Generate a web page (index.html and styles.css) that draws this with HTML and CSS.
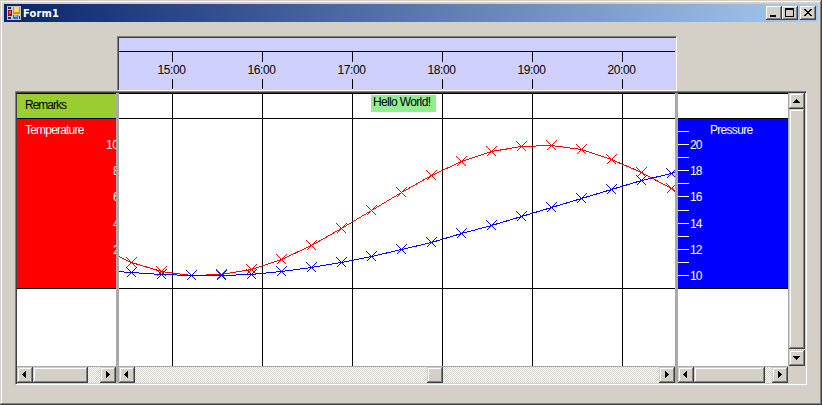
FILE: index.html
```html
<!DOCTYPE html>
<html lang="en">
<head>
    <meta charset="UTF-8">
    <title>Form1</title>
    <link rel="stylesheet" href="styles.css">
</head>
<body>
    <div class="window">
        <div class="titlebar">
            <svg class="app-icon" width="14" height="14">
                <rect width="14" height="14" fill="#c8c8c8"/>
                <rect x="1" y="1" width="3" height="2" fill="#123070"/>
                <rect x="1" y="4" width="4" height="6" fill="#a01010"/>
                <rect x="2" y="5" width="2" height="3" fill="#f05040"/>
                <rect x="6" y="1" width="7" height="7" fill="#d89010"/>
                <rect x="7" y="1" width="5" height="5" fill="#ffe050"/>
                <rect x="6" y="9" width="5" height="4" fill="#3070d0"/>
                <rect x="7" y="9" width="3" height="2" fill="#80b8ff"/>
                <rect x="1" y="11" width="3" height="2" fill="#123070"/>
                <rect x="12" y="10" width="1" height="3" fill="#123070"/>
            </svg>
            <span class="title">Form1</span>
            <div class="buttons">
                <div class="btn"><svg width="12" height="10"><path d="M2 7h6v2H2z"/></svg></div>
                <div class="btn"><svg width="12" height="10"><path d="M1 0h9v9H1zM2 2v6h7V2z" fill-rule="evenodd"/></svg></div>
                <div class="btn close"><svg width="12" height="10"><path d="M2 1h2v1h1v1h2v-1h1v-1h2v1h-1v1h-1v1h-1v1h1v1h1v1h1v1h-2v-1h-1v-1h-2v1h-1v1h-2v-1h1v-1h1v-1h1v-1h-1v-1h-1v-1h-1z"/></svg></div>
            </div>
        </div>

        <div class="client">
            <div class="timescale">
                <svg id="scale" width="556" height="51"></svg>
            </div>
            <div class="grid">
                <div class="panes">
                    <div class="pane left">
                        <div class="view">
                            <div class="row remarks">Remarks</div>
                            <div class="row temperature">
                                <span>Temperature</span>
                                <svg id="tempAxis" class="axis" width="99" height="169"></svg>
                            </div>
                        </div>
                        <div class="hscroll">
                            <div class="sb"><svg width="16" height="16"><path d="M9 4v7h-1v-1h-1v-1h-1v-1h-1v-1h1v-1h1v-1h1v-1z"/></svg></div>
                            <div class="sb thumb"></div>
                            <div class="track"></div>
                            <div class="sb"><svg width="16" height="16"><path d="M6 4v7h1v-1h1v-1h1v-1h1v-1h-1v-1h-1v-1h-1v-1z"/></svg></div>
                        </div>
                    </div>
                    <div class="splitter"></div>
                    <div class="pane center">
                        <div class="view">
                            <svg id="chart" width="556" height="273"></svg>
                        </div>
                        <div class="hscroll">
                            <div class="sb"><svg width="16" height="16"><path d="M9 4v7h-1v-1h-1v-1h-1v-1h-1v-1h1v-1h1v-1h1v-1z"/></svg></div>
                            <div class="track before"></div>
                            <div class="sb thumb"></div>
                            <div class="track"></div>
                            <div class="sb"><svg width="16" height="16"><path d="M6 4v7h1v-1h1v-1h1v-1h1v-1h-1v-1h-1v-1h-1v-1z"/></svg></div>
                        </div>
                    </div>
                    <div class="splitter"></div>
                    <div class="pane right">
                        <div class="view">
                            <div class="row empty"></div>
                            <div class="row pressure">
                                <span>Pressure</span>
                                <svg id="pressAxis" class="axis" width="110" height="169"></svg>
                            </div>
                        </div>
                        <div class="hscroll">
                            <div class="sb"><svg width="16" height="16"><path d="M9 4v7h-1v-1h-1v-1h-1v-1h-1v-1h1v-1h1v-1h1v-1z"/></svg></div>
                            <div class="sb thumb"></div>
                            <div class="track"></div>
                            <div class="sb"><svg width="16" height="16"><path d="M6 4v7h1v-1h1v-1h1v-1h1v-1h-1v-1h-1v-1h-1v-1z"/></svg></div>
                        </div>
                    </div>
                    <div class="vscroll">
                        <div class="sb"><svg width="16" height="16"><path d="M4 10h7v-1h-1v-1h-1v-1h-1v-1h-1v1h-1v1h-1v1h-1z"/></svg></div>
                        <div class="sb thumb"></div>
                        <div class="track"></div>
                        <div class="sb"><svg width="16" height="16"><path d="M4 6h7v1h-1v1h-1v1h-1v1h-1v-1h-1v-1h-1v-1h-1z"/></svg></div>
                    </div>
                </div>
            </div>
        </div>
    </div>
    <script src="chart.js"></script>
</body>
</html>
```
FILE: styles.css
```css
body {
    margin: 0;
    font-family: "Liberation Sans", Arial, sans-serif;
    font-size: 12px;
    overflow: hidden;
}
svg {
    display: block;
    shape-rendering: crispEdges;
}
svg text {
    font-size: 12px;
}
.window {
    width: 822px;
    height: 405px;
    box-sizing: border-box;
    padding: 4px;
    background: #d4d0c8;
    box-shadow: inset -1px -1px #404040, inset 1px 1px #d4d0c8, inset -2px -2px #808080, inset 2px 2px #fff;
}
.titlebar {
    display: flex;
    align-items: center;
    height: 18px;
    padding: 0 2px 0 3px;
    background: linear-gradient(to right, #0a246a, #a6caf0);
}
.title {
    flex: 1;
    margin-left: 2px;
    color: #fff;
    font: bold 11px "DejaVu Sans Condensed", "DejaVu Sans", sans-serif;
    letter-spacing: 0.2px;
}
.buttons {
    display: flex;
}
.btn {
    width: 16px;
    height: 14px;
    box-sizing: border-box;
    padding: 2px;
    background: #d4d0c8;
    box-shadow: inset -1px -1px #404040, inset 1px 1px #fff, inset -2px -2px #808080;
}
.close {
    margin-left: 2px;
}
.client {
    padding: 14px 0 0 11px;
}
.timescale {
    width: 556px;
    height: 51px;
    margin-left: 102px;
    border: 1px solid;
    border-color: #808080 #fff #fff #808080;
    padding: 1px;
    background: #d0d0ff;
    box-shadow: inset 1px 1px #404040, inset -1px -1px #d4d0c8;
}
.grid {
    width: 788px;
    height: 290px;
    border: 1px solid;
    border-color: #808080 #fff #fff #808080;
    padding: 1px;
    box-shadow: inset 1px 1px #404040, inset -1px -1px #d4d0c8;
}
.panes {
    display: flex;
    height: 290px;
}
.pane {
    display: flex;
    flex-direction: column;
}
.left {
    width: 99px;
}
.center {
    width: 556px;
}
.right {
    width: 110px;
}
.splitter {
    width: 3px;
    background: #a9a9a9;
}
.view {
    height: 273px;
    background: #fff;
    border-bottom: 1px solid #a9a9a9;
}
.row {
    box-sizing: border-box;
    border-bottom: 1px solid #000;
    position: relative;
    padding-left: 8px;
}
.remarks, .empty {
    height: 26px;
    border-top: 1px solid #000;
    line-height: 23px;
}
.remarks {
    background: #9acd32;
    letter-spacing: -1px;
}
.temperature, .pressure {
    height: 170px;
    padding-top: 4px;
    color: #fff;
    line-height: 14px;
    letter-spacing: -0.8px;
}
.temperature {
    background: #f00;
}
.pressure {
    background: #00f;
    padding-left: 32px;
    letter-spacing: -0.9px;
}
.pressure span {
    letter-spacing: -0.7px;
}
/* scale labels are drawn over the row caption */
.axis {
    position: absolute;
    top: 0;
    left: 0;
    fill: #fff;
    letter-spacing: 0;
}
.hscroll {
    display: flex;
    height: 16px;
}
.sb {
    width: 16px;
    height: 16px;
    background: #d4d0c8;
    box-shadow: inset -1px -1px #404040, inset 1px 1px #d4d0c8, inset -2px -2px #808080, inset 2px 2px #fff;
}
.track {
    flex: 1;
    background: repeating-conic-gradient(#fff 0 25%, #d4d0c8 0 50%) 0 0 / 2px 2px;
}
.left .thumb {
    width: 55px;
}
.center .before {
    flex: none;
    width: 292px;
}
.right .thumb {
    width: 71px;
}
.vscroll {
    display: flex;
    flex-direction: column;
    width: 16px;
    height: 273px;
    border-left: 1px solid #a9a9a9;
}
.vscroll .thumb {
    height: 240px;
}
```
FILE: chart.js
```js
const NS = 'http://www.w3.org/2000/svg';

function add(parent, name, attrs, text) {
    const el = document.createElementNS(NS, name);
    for (const key in attrs) {
        el.setAttribute(key, attrs[key]);
    }
    if (text) {
        el.textContent = text;
    }
    parent.appendChild(el);
}

function rect(parent, x, y, width, height, fill) {
    add(parent, 'rect', {x, y, width, height, fill});
}

// time scale
const scale = document.getElementById('scale');
rect(scale, 0, 13, 556, 1, '#000');
for (let i = 0; i < 6; i++) {
    const x = 53 + i * 90;
    rect(scale, x, 14, 1, 10, '#000');
    rect(scale, x, 41, 1, 10, '#000');
    add(scale, 'text', {x: x - 14.5, y: 36, textLength: 28.5}, (15 + i) + ':00');
}

// left and right value axes
const tempAxis = document.getElementById('tempAxis');
[10, 8, 6, 4, 2].forEach((v, i) => {
    add(tempAxis, 'text', {x: v === 10 ? 89 : 96, y: 30 + Math.round(i * 26.2), 'letter-spacing': -0.5}, String(v));
});
const pressAxis = document.getElementById('pressAxis');
[12, 25, 38, 51, 64, 77, 91, 104, 117, 130, 143, 156].forEach((y, i) => {
    rect(pressAxis, 0, y, 11, 1, '#fff');
    if (i % 2) {
        add(pressAxis, 'text', {x: 12, y: y + 5, textLength: 12.5}, String(21 - i));
    }
});

// chart, 30px between the samples
const chart = document.getElementById('chart');
rect(chart, 0, 0, 556, 1, '#000');
rect(chart, 0, 25, 556, 1, '#000');
rect(chart, 0, 195, 556, 1, '#000');
for (let x = 53; x < 556; x += 90) {
    rect(chart, x, 0, 1, 273, '#000');
}
rect(chart, 252, 2, 65, 17, '#90ee90');
add(chart, 'text', {x: 254, y: 13, textLength: 58}, 'Hello World!');

const red = [155, 169, 178, 182, 181, 176, 166, 152, 135, 117, 99, 82, 68, 58, 53, 52, 56, 66, 79, 95, 112];
const blue = [177, 179, 181, 182, 182, 181, 178, 174, 169, 163, 156, 149, 140, 132, 123, 114, 105, 96, 87, 80, 72];

function drawSeries(values, color) {
    const points = values.map((y, i) => [i * 30 - 17.5, y + 0.5]);
    add(chart, 'polyline', {points: points.join(' '), fill: 'none', stroke: color});
    points.forEach(([x, y]) => {
        add(chart, 'path', {
            d: `M${x - 5} ${y - 5}L${x + 5} ${y + 5}M${x + 5} ${y - 5}L${x - 5} ${y + 5}`,
            stroke: color
        });
    });
}

drawSeries(red, '#f00');
drawSeries(blue, '#00f');
```
